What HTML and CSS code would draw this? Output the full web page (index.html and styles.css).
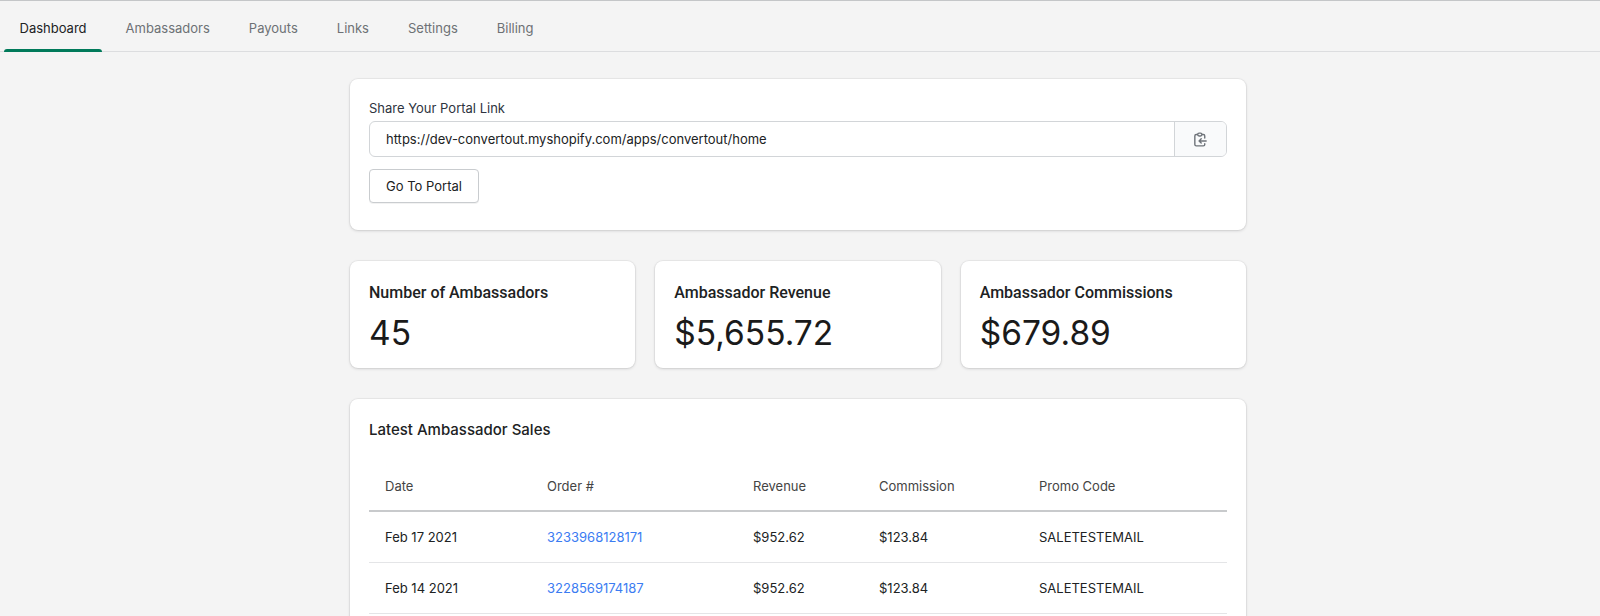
FILE: index.html
```html
<!DOCTYPE html>
<html lang="en">
<head>
<meta charset="utf-8">
<title>Dashboard</title>
<link rel="stylesheet" href="styles.css">
</head>
<body>
<nav class="tabs">
  <a class="tab active">Dashboard</a>
  <a class="tab">Ambassadors</a>
  <a class="tab">Payouts</a>
  <a class="tab">Links</a>
  <a class="tab">Settings</a>
  <a class="tab">Billing</a>
</nav>
<main class="main">
  <div class="container">
    <section class="card share">
      <div class="share-label">Share Your Portal Link</div>
      <div class="input-group">
        <div class="input">https://dev-convertout.myshopify.com/apps/convertout/home</div>
        <button class="copy-btn" aria-label="Copy">
          <svg width="17" height="17" viewBox="0 0 24 24" fill="none" stroke="currentColor" stroke-width="2" stroke-linecap="round" stroke-linejoin="round"><path d="M8 5H6a2 2 0 00-2 2v12a2 2 0 002 2h10a2 2 0 002-2v-1M8 5a2 2 0 002 2h2a2 2 0 002-2M8 5a2 2 0 012-2h2a2 2 0 012 2m0 0h2a2 2 0 012 2v3m2 4H10m0 0l3-3m-3 3l3 3"/></svg>
        </button>
      </div>
      <button class="btn">Go To Portal</button>
    </section>

    <section class="stats">
      <div class="card stat">
        <div class="stat-title">Number of Ambassadors</div>
        <div class="stat-value">45</div>
      </div>
      <div class="card stat">
        <div class="stat-title">Ambassador Revenue</div>
        <div class="stat-value">$5,655.72</div>
      </div>
      <div class="card stat">
        <div class="stat-title">Ambassador Commissions</div>
        <div class="stat-value">$679.89</div>
      </div>
    </section>

    <section class="card sales">
      <h2 class="sales-title">Latest Ambassador Sales</h2>
      <table class="table">
        <colgroup>
          <col class="c-date"><col class="c-order"><col class="c-rev"><col class="c-comm"><col class="c-promo">
        </colgroup>
        <thead>
          <tr><th>Date</th><th>Order #</th><th>Revenue</th><th>Commission</th><th>Promo Code</th></tr>
        </thead>
        <tbody>
          <tr><td>Feb 17 2021</td><td><a class="link">3233968128171</a></td><td>$952.62</td><td>$123.84</td><td>SALETESTEMAIL</td></tr>
          <tr><td>Feb 14 2021</td><td><a class="link">3228569174187</a></td><td>$952.62</td><td>$123.84</td><td>SALETESTEMAIL</td></tr>
        </tbody>
      </table>
    </section>
  </div>
</main>
</body>
</html>
```

FILE: styles.css
```css
* { box-sizing: border-box; }
html, body { margin: 0; padding: 0; }
body {
  background: #f4f4f4;
  font-family: Inter, "Noto Sans", sans-serif;
  color: #202223;
  border-top: 1px solid #c4c6c8;
}

.tabs {
  display: flex;
  gap: 8px;
  padding-left: 4px;
  height: 51px;
  border-bottom: 1px solid #dcdddf;
}
.tab {
  position: relative;
  display: flex;
  align-items: center;
  padding: 3px 15.5px 0;
  font-size: 13px;
  color: #6d7175;
  text-decoration: none;
}
.tab.active { color: #202223; }
.tab.active::after {
  content: "";
  position: absolute;
  left: 0;
  right: 0;
  bottom: -1px;
  height: 3px;
  background: #007a5a;
  border-radius: 3px 3px 0 0;
}

.main { padding: 27px 4px 0 0; }
.container { width: 896px; margin: 0 auto; }

.card {
  background: #fff;
  border-radius: 8px;
  box-shadow: 0 0 0 1px rgba(63,63,68,0.05), 0 1px 3px rgba(63,63,68,0.18);
}

.share { padding: 19px 19px 27px; }
.share-label {
  font-size: 13px;
  line-height: 20px;
  color: #2e3440;
  margin-bottom: 3px;
}
.input-group {
  display: flex;
  height: 36px;
  border: 1px solid #d2d5d8;
  border-radius: 6px;
  overflow: hidden;
}
.input {
  flex: 1;
  display: flex;
  align-items: center;
  padding-left: 16px;
  font-size: 13px;
  color: #202223;
}
.copy-btn {
  width: 52px;
  border: 0;
  border-left: 1px solid #d2d5d8;
  background: #f9fafb;
  color: #6f747a;
  display: flex;
  align-items: center;
  justify-content: center;
  padding: 0;
}
.btn {
  margin-top: 12px;
  height: 34px;
  width: 110px;
  background: #fff;
  border: 1px solid #c9cccf;
  border-radius: 4px;
  box-shadow: 0 1px 0 rgba(0,0,0,0.05);
  font-family: Inter, "Noto Sans", sans-serif;
  font-size: 13px;
  color: #202223;
  padding: 0;
}

.stats {
  display: grid;
  grid-template-columns: repeat(3, 1fr);
  gap: 20px;
  margin-top: 31px;
}
.stat { padding: 21px 19px 16px; }
.stat-title {
  font-family: Roboto, sans-serif;
  font-weight: 500;
  font-size: 16px;
  line-height: 22px;
  color: #202223;
}
.stat-value {
  font-family: Inter, sans-serif;
  font-size: 33.5px;
  line-height: 38px;
  margin-top: 10px;
  color: #1a1a1a;
}

.sales {
  margin-top: 31px;
  padding: 19px 19px 19px;
}
.sales-title {
  margin: 0 0 19px;
  font-size: 15px;
  line-height: 24px;
  font-weight: 500;
  color: #202223;
}
.table {
  width: 100%;
  border-collapse: collapse;
  table-layout: fixed;
  font-size: 13px;
}
.c-date { width: 162px; }
.c-order { width: 206px; }
.c-rev { width: 126px; }
.c-comm { width: 160px; }
.c-promo { width: 204px; }
.table th {
  text-align: left;
  font-weight: 400;
  color: #444;
  height: 50px;
  padding: 0 16px;
  border-bottom: 2px solid #c8cacc;
}
.table td {
  height: 51px;
  padding: 0 16px;
  border-bottom: 1px solid #e4e5e7;
  color: #202223;
}
.link { color: #3b7cf2; text-decoration: none; }
```
